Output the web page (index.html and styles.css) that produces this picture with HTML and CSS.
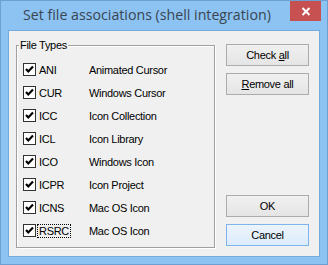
FILE: index.html
```html
<!DOCTYPE html>
<html lang="en">
<head>
    <meta charset="UTF-8">
    <title>Set file associations</title>
    <link rel="stylesheet" href="styles.css">
</head>
<body>
    <div class="window">
        <div class="titlebar">
            <span class="title">Set file associations (shell integration)</span>
            <div class="close-btn">
                <svg width="10" height="9" viewBox="0 0 10 9">
                    <path d="M1.5 1 L8.5 8 M8.5 1 L1.5 8" stroke="#fff" stroke-width="2"/>
                </svg>
            </div>
        </div>
        <div class="client">
            <div class="group">
                <span class="group-label">File Types</span>
                <div class="row"><span class="check"></span><span class="ext">ANI</span><span class="desc">Animated Cursor</span></div>
                <div class="row"><span class="check"></span><span class="ext">CUR</span><span class="desc">Windows Cursor</span></div>
                <div class="row"><span class="check"></span><span class="ext">ICC</span><span class="desc">Icon Collection</span></div>
                <div class="row"><span class="check"></span><span class="ext">ICL</span><span class="desc">Icon Library</span></div>
                <div class="row"><span class="check"></span><span class="ext">ICO</span><span class="desc">Windows Icon</span></div>
                <div class="row"><span class="check"></span><span class="ext">ICPR</span><span class="desc">Icon Project</span></div>
                <div class="row"><span class="check"></span><span class="ext">ICNS</span><span class="desc">Mac OS Icon</span></div>
                <div class="row"><span class="check"></span><span class="ext"><span class="focus">RSRC</span></span><span class="desc">Mac OS Icon</span></div>
            </div>
            <div class="buttons">
                <div class="btn-group">
                    <div class="btn"><span>Check <u>a</u>ll</span></div>
                    <div class="btn"><span><u>R</u>emove all</span></div>
                </div>
                <div class="btn-group">
                    <div class="btn"><span>OK</span></div>
                    <div class="btn btn-default"><span>Cancel</span></div>
                </div>
            </div>
        </div>
    </div>
</body>
</html>
```

FILE: styles.css
```css
* {
    margin: 0;
    padding: 0;
    box-sizing: border-box;
}

body {
    font-family: 'Liberation Sans', Arial, sans-serif;
    font-size: 11px;
    color: #000;
    background: #fff;
}

.window {
    width: 328px;
    height: 265px;
    background: #8cc3f3;
    border: 1px solid #6d9fd2;
    display: flex;
    flex-direction: column;
}

.titlebar {
    height: 29px;
    display: flex;
    align-items: flex-start;
}

.title {
    font-family: 'Open Sans', 'Noto Sans', sans-serif;
    font-size: 14.2px;
    color: #3a4550;
    padding-left: 22px;
    padding-top: 4px;
    flex: 1;
    white-space: nowrap;
}

.close-btn {
    width: 31px;
    height: 20px;
    margin-right: 6px;
    background: #c75050;
    display: flex;
    align-items: center;
    justify-content: center;
}

.client {
    flex: 1;
    margin: 0 7px 7px 7px;
    background: #f0f0f0;
    border: 1px solid #76abdd;
    display: flex;
    align-items: flex-start;
    padding-left: 7px;
}

/* group box with etched border */
.group {
    position: relative;
    width: 199px;
    height: 203px;
    margin-top: 14px;
    border: 1px solid #a0a0a0;
    box-shadow: inset 1px 1px 0 #fff, 1px 1px 0 #fff;
    padding: 12px 0 0 6px;
}

.group-label {
    position: absolute;
    top: -7px;
    left: 2px;
    padding: 0 1px;
    background: #f0f0f0;
    letter-spacing: -0.3px;
}

.row {
    height: 23px;
    display: flex;
    align-items: center;
    letter-spacing: -0.3px;
}

.check {
    width: 13px;
    height: 13px;
    border: 1px solid #333;
    background: #fff url("data:image/svg+xml,%3Csvg xmlns='http://www.w3.org/2000/svg' width='11' height='11'%3E%3Cpath d='M2 5 L4.3 7.5 L9 2.5' fill='none' stroke='%23000' stroke-width='2.2'/%3E%3C/svg%3E") no-repeat center;
    margin-right: 3px;
}

.ext {
    width: 50px;
}

.focus {
    outline: 1px dotted #000;
    outline-offset: 0;
    padding: 0 1px;
    margin-left: -1px;
}

.buttons {
    width: 83px;
    height: 202px;
    margin-top: 13px;
    margin-left: 11px;
    display: flex;
    flex-direction: column;
    justify-content: space-between;
}

.btn-group {
    display: flex;
    flex-direction: column;
    gap: 7px;
}

.btn {
    height: 22px;
    border: 1px solid #acacac;
    background: linear-gradient(#f0f0f0, #e5e5e5);
    display: flex;
    align-items: center;
    justify-content: center;
    letter-spacing: -0.3px;
}

.btn-default {
    border-color: #7eb4ea;
    background: linear-gradient(#ecf4fc, #dcecfc);
}
```
